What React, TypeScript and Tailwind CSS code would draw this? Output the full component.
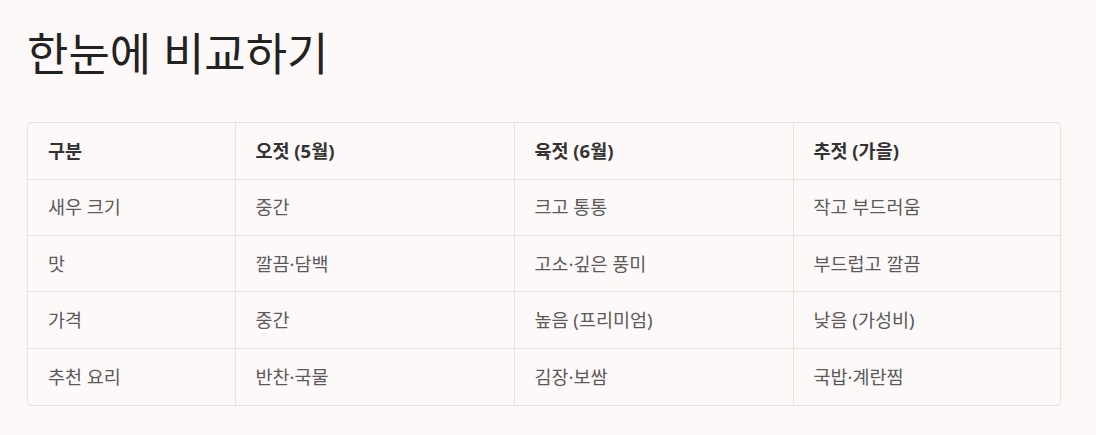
const headers = ["구분", "오젓 (5월)", "육젓 (6월)", "추젓 (가을)"];

const rows: string[][] = [
  ["새우 크기", "중간", "크고 통통", "작고 부드러움"],
  ["맛", "깔끔·담백", "고소·깊은 풍미", "부드럽고 깔끔"],
  ["가격", "중간", "높음 (프리미엄)", "낮음 (가성비)"],
  ["추천 요리", "반찬·국물", "김장·보쌈", "국밥·계란찜"],
];

const colWidths = ["w-[207px]", "w-[279px]", "w-[279px]", "w-[269px]"];

export default function App() {
  return (
    <div
      className="min-h-[435px] w-full bg-[#fdf9f8] px-[27px] pt-[24px]"
      style={{ fontFamily: '"Noto Sans", "Noto Sans CJK KR", sans-serif' }}
    >
      <h1 className="text-[45px] leading-[60px] font-normal text-[#222]">한눈에 비교하기</h1>
      <div className="mt-[38px] w-[1034px] overflow-hidden rounded-[4px] border border-[#e7e3e1]">
        <table className="w-full border-collapse table-fixed">
          <thead>
            <tr className="h-[56px]">
              {headers.map((h, i) => (
                <th
                  key={h}
                  className={`${colWidths[i]} border-l border-[#e7e3e1] first:border-l-0 px-5 text-left text-[18.5px] font-bold text-[#333]`}
                >
                  {h}
                </th>
              ))}
            </tr>
          </thead>
          <tbody>
            {rows.map((r) => (
              <tr key={r[0]} className="h-[56.4px] border-t border-[#e7e3e1]">
                {r.map((c, i) => (
                  <td
                    key={i}
                    className="border-l border-[#e7e3e1] first:border-l-0 px-5 text-[18.5px] text-[#5a5a5a]"
                  >
                    {c}
                  </td>
                ))}
              </tr>
            ))}
          </tbody>
        </table>
      </div>
    </div>
  );
}
